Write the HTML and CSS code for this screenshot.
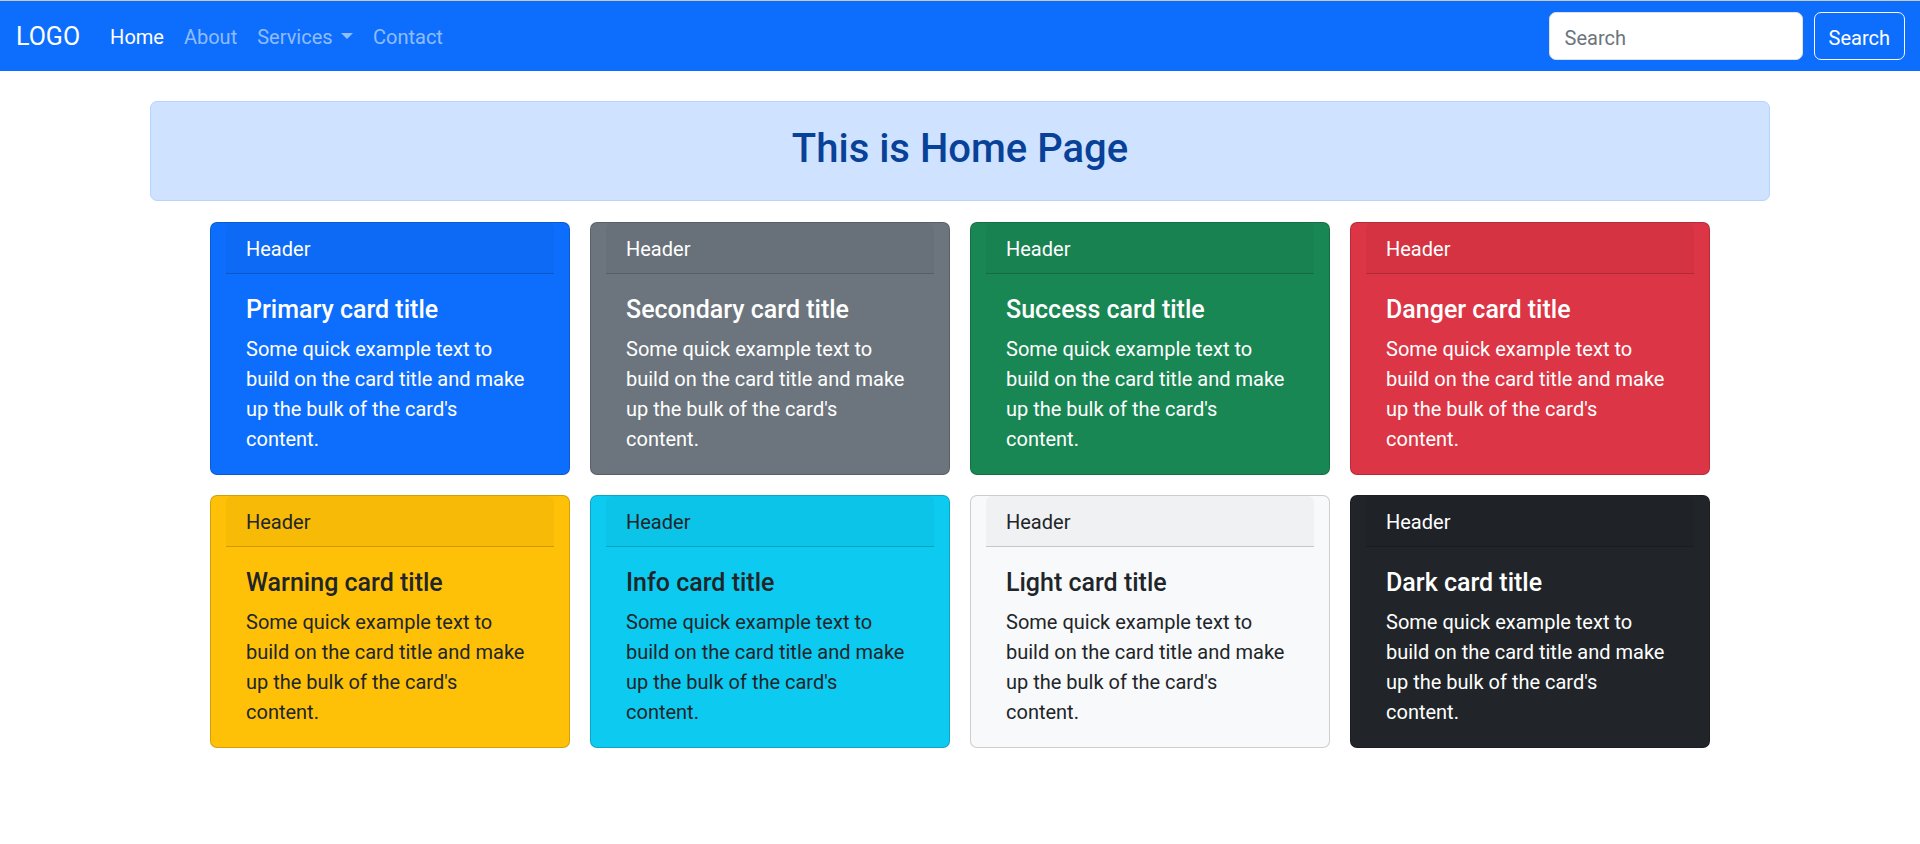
FILE: index.html
```html
<!DOCTYPE html>
<html lang="en">
<head>
<meta charset="utf-8">
<title>Home</title>
<link rel="stylesheet" href="styles.css">
</head>
<body>
<nav class="navbar">
  <div class="nav-left">
    <a class="brand" href="#">LOGO</a>
    <ul class="nav-links">
      <li><a class="nav-link active" href="#">Home</a></li>
      <li><a class="nav-link" href="#">About</a></li>
      <li><a class="nav-link dropdown-toggle" href="#">Services</a></li>
      <li><a class="nav-link" href="#">Contact</a></li>
    </ul>
  </div>
  <form class="search-form">
    <input class="search-input" type="search" placeholder="Search">
    <button class="search-btn" type="button">Search</button>
  </form>
</nav>

<main class="container">
  <div class="alert">
    <h2 class="alert-title">This is Home Page</h2>
  </div>

  <div class="cards">
    <div class="card card-primary">
      <div class="card-header">Header</div>
      <div class="card-body">
        <h5 class="card-title">Primary card title</h5>
        <p class="card-text">Some quick example text to build on the card title and make up the bulk of the card's content.</p>
      </div>
    </div>
    <div class="card card-secondary">
      <div class="card-header">Header</div>
      <div class="card-body">
        <h5 class="card-title">Secondary card title</h5>
        <p class="card-text">Some quick example text to build on the card title and make up the bulk of the card's content.</p>
      </div>
    </div>
    <div class="card card-success">
      <div class="card-header">Header</div>
      <div class="card-body">
        <h5 class="card-title">Success card title</h5>
        <p class="card-text">Some quick example text to build on the card title and make up the bulk of the card's content.</p>
      </div>
    </div>
    <div class="card card-danger">
      <div class="card-header">Header</div>
      <div class="card-body">
        <h5 class="card-title">Danger card title</h5>
        <p class="card-text">Some quick example text to build on the card title and make up the bulk of the card's content.</p>
      </div>
    </div>
    <div class="card card-warning">
      <div class="card-header">Header</div>
      <div class="card-body">
        <h5 class="card-title">Warning card title</h5>
        <p class="card-text">Some quick example text to build on the card title and make up the bulk of the card's content.</p>
      </div>
    </div>
    <div class="card card-info">
      <div class="card-header">Header</div>
      <div class="card-body">
        <h5 class="card-title">Info card title</h5>
        <p class="card-text">Some quick example text to build on the card title and make up the bulk of the card's content.</p>
      </div>
    </div>
    <div class="card card-light">
      <div class="card-header">Header</div>
      <div class="card-body">
        <h5 class="card-title">Light card title</h5>
        <p class="card-text">Some quick example text to build on the card title and make up the bulk of the card's content.</p>
      </div>
    </div>
    <div class="card card-dark">
      <div class="card-header">Header</div>
      <div class="card-body">
        <h5 class="card-title">Dark card title</h5>
        <p class="card-text">Some quick example text to build on the card title and make up the bulk of the card's content.</p>
      </div>
    </div>
  </div>
</main>
</body>
</html>
```

FILE: styles.css
```css
* {
  box-sizing: border-box;
}

html, body {
  margin: 0;
  padding: 0;
}

body {
  font-family: Roboto, "Liberation Sans", Arial, sans-serif;
  font-size: 20px;
  line-height: 1.5;
  color: #212529;
  background: #fff;
  border-top: 1px solid #c9c9c9;
}

/* Navbar */
.navbar {
  height: 70px;
  background: #0d6efd;
  display: flex;
  align-items: center;
  justify-content: space-between;
  padding: 0 15px 0 16px;
}

.nav-left {
  display: flex;
  align-items: center;
  padding-top: 2px;
}

.brand {
  font-size: 25px;
  line-height: 1.5;
  padding: 5px 0;
  margin-right: 20px;
  color: #fff;
  text-decoration: none;
}

.nav-links {
  display: flex;
  list-style: none;
  margin: 0;
  padding: 0;
}

.nav-link {
  display: block;
  padding: 10px 10px;
  color: rgba(255, 255, 255, 0.55);
  text-decoration: none;
  font-size: 20px;
  line-height: 1.5;
}

.nav-link.active {
  color: #fff;
}

.dropdown-toggle::after {
  content: "";
  display: inline-block;
  margin-left: 0.42em;
  vertical-align: 0.255em;
  border-top: 0.3em solid;
  border-right: 0.3em solid transparent;
  border-left: 0.3em solid transparent;
}

.search-form {
  display: flex;
  align-items: center;
  gap: 11px;
}

.search-input {
  width: 254px;
  height: 48px;
  padding: 9px 15px 5px;
  font-family: inherit;
  font-size: 20px;
  color: #212529;
  background: #fff;
  border: 1px solid #dee2e6;
  border-radius: 7px;
  outline: none;
}

.search-input::placeholder {
  color: #6c757d;
}

.search-btn {
  height: 48px;
  padding: 9px 14px 5px;
  font-family: inherit;
  font-size: 20px;
  color: #fff;
  background: transparent;
  border: 1px solid #f8f9fa;
  border-radius: 7px;
}

/* Content */
.container {
  max-width: 1650px;
  margin: 0 auto;
  padding: 0 15px;
}

.alert {
  margin-top: 30px;
  margin-bottom: 21px;
  padding: 23px 20px 17px;
  background: #cfe2ff;
  border: 1px solid #b6d4fe;
  border-radius: 7px;
  color: #084298;
  text-align: center;
}

.alert-title {
  margin: 0 0 10px;
  font-size: 40px;
  font-weight: 500;
  line-height: 1.2;
}

.cards {
  display: flex;
  flex-wrap: wrap;
  justify-content: center;
  gap: 20px 20px;
}

.card {
  width: 360px;
  padding: 0 15px;
  border: 1px solid rgba(0, 0, 0, 0.175);
  border-radius: 7px;
  color: #fff;
}

.card-header {
  padding: 11px 20px 9px;
  background: rgba(0, 0, 0, 0.03);
  border-bottom: 1px solid rgba(0, 0, 0, 0.175);
  border-radius: 6px 6px 0 0;
  line-height: 1.5;
}

.card-body {
  padding: 21px 20px 20px;
}

.card-title {
  margin: 0 0 9px;
  font-size: 25px;
  font-weight: 500;
  line-height: 1.2;
}

.card-text {
  margin: 0;
}

.card-primary { background: #0d6efd; }
.card-secondary { background: #6c757d; }
.card-success { background: #198754; }
.card-danger { background: #dc3545; }
.card-warning { background: #ffc107; color: #212529; }
.card-info { background: #0dcaf0; color: #212529; }
.card-light { background: #f8f9fa; color: #212529; }
.card-dark { background: #212529; }
```
